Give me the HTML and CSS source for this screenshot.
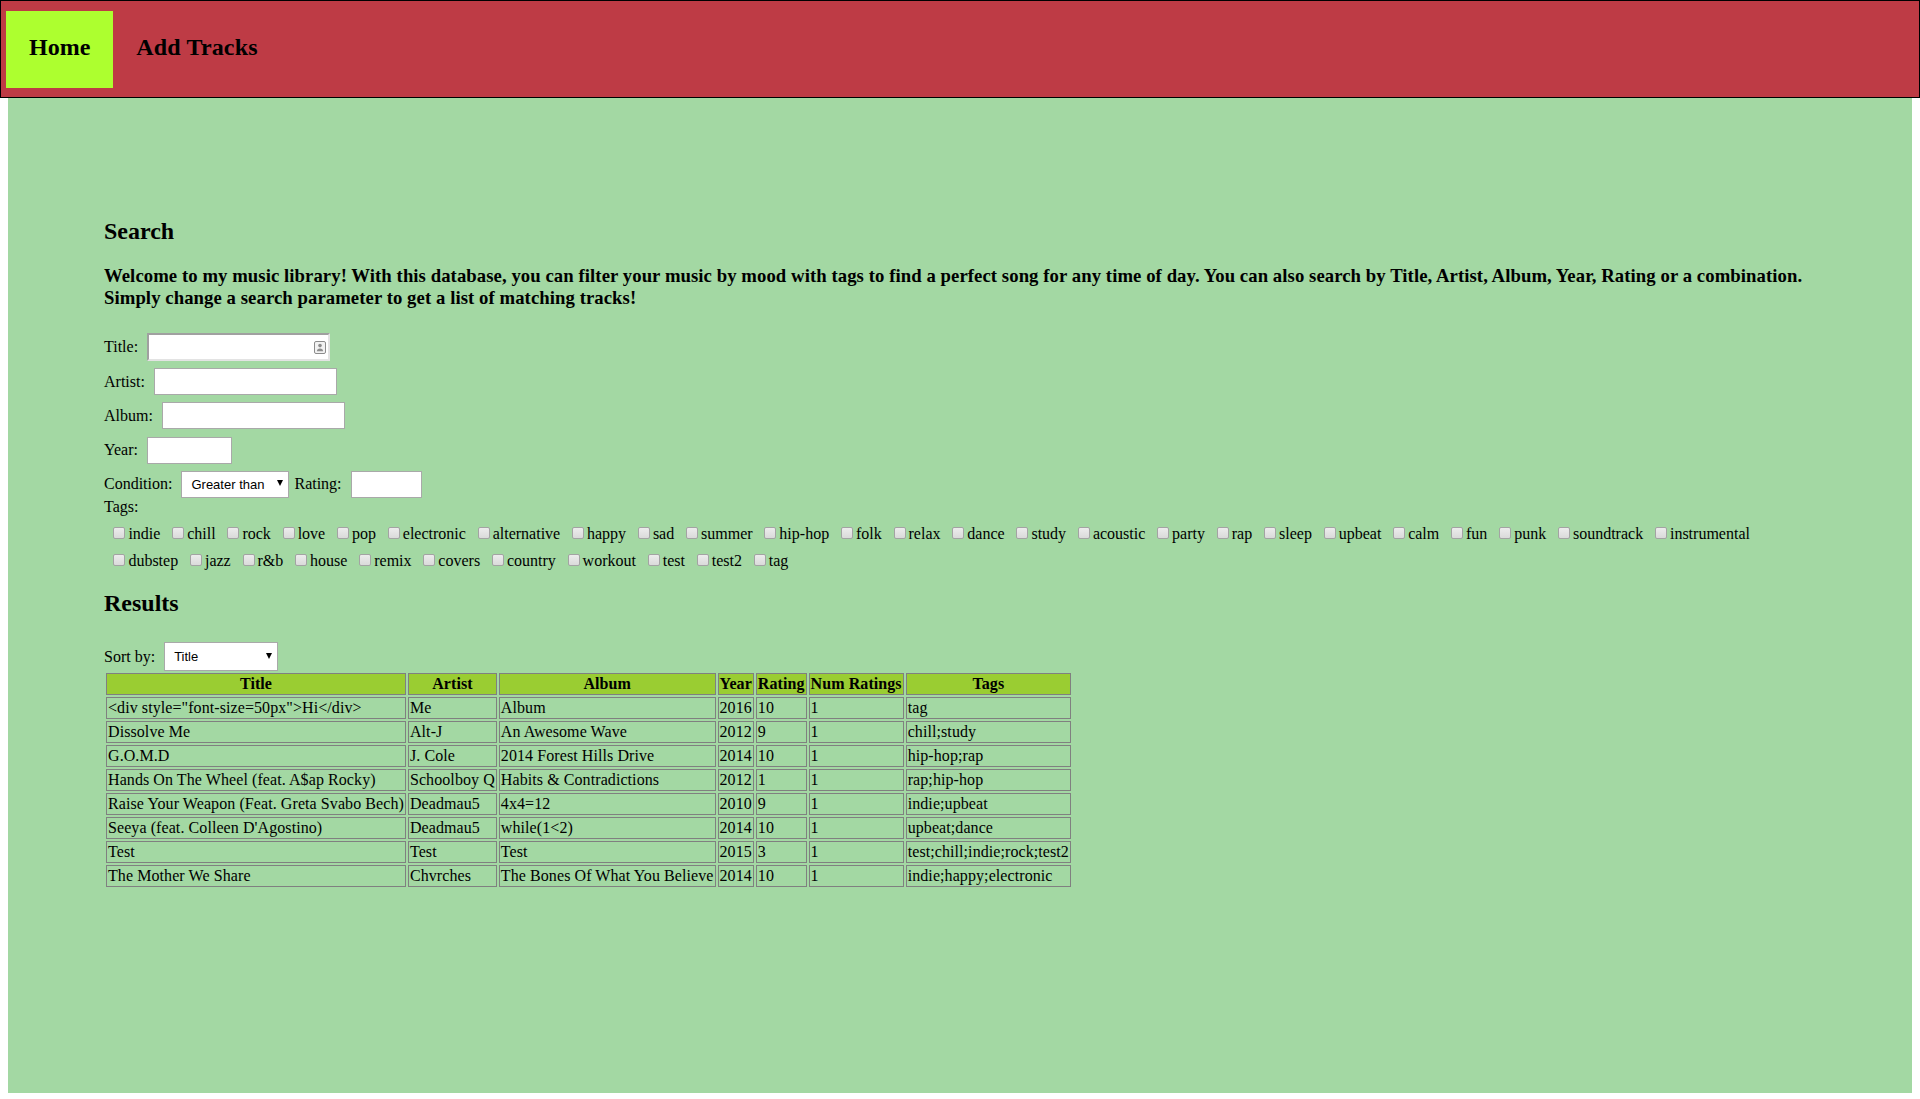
FILE: index.html
```html
<!DOCTYPE html>
<html lang="en">
<head>
<meta charset="utf-8">
<title>Music Library</title>
<link rel="stylesheet" href="styles.css">
</head>
<body>
<header class="topbar">
  <nav class="nav">
    <a class="nav-link nav-link-active" href="#">Home</a>
    <a class="nav-link" href="#">Add Tracks</a>
  </nav>
</header>
<main class="page">
  <h2 class="section-title">Search</h2>
  <h3 class="intro">Welcome to my music library! With this database, you can filter your music by mood with tags to find a perfect song for any time of day. You can also search by Title, Artist, Album, Year, Rating or a combination. Simply change a search parameter to get a list of matching tracks!</h3>
  <form class="search-form">
    <div class="field-row">
      <label class="field-label" for="f-title">Title:</label>
      <span class="input-wrap">
        <input class="text-input text-input-wide text-input-inset" id="f-title" type="text">
        <svg class="autofill-icon" width="12" height="13" viewBox="0 0 12 13" aria-hidden="true"><rect x="0.5" y="0.5" width="11" height="12" rx="1.5" fill="#f2f2f2" stroke="#8c8c8c"/><circle cx="6" cy="4.6" r="1.8" fill="#8c8c8c"/><path d="M2.9 10.2 Q3.1 7.4 6 7.4 Q8.9 7.4 9.1 10.2 Z" fill="#8c8c8c"/></svg>
      </span>
    </div>
    <div class="field-row">
      <label class="field-label" for="f-artist">Artist:</label>
      <input class="text-input text-input-wide" id="f-artist" type="text">
    </div>
    <div class="field-row">
      <label class="field-label" for="f-album">Album:</label>
      <input class="text-input text-input-wide" id="f-album" type="text">
    </div>
    <div class="field-row">
      <label class="field-label" for="f-year">Year:</label>
      <input class="text-input text-input-year" id="f-year" type="text">
    </div>
    <div class="field-row">
      <label class="field-label" for="f-cond">Condition:</label>
      <span class="select-wrap">
        <select class="select select-cond" id="f-cond"><option>Greater than</option><option>Less than</option><option>Equal to</option></select>
      </span>
      <label class="field-label field-label-rating" for="f-rating">Rating:</label>
      <input class="text-input text-input-rating" id="f-rating" type="text">
    </div>
    <div class="tags-label">Tags:</div>
    <div class="tag-list">
      <label class="tag"><input class="tag-box" type="checkbox">indie</label>
      <label class="tag"><input class="tag-box" type="checkbox">chill</label>
      <label class="tag"><input class="tag-box" type="checkbox">rock</label>
      <label class="tag"><input class="tag-box" type="checkbox">love</label>
      <label class="tag"><input class="tag-box" type="checkbox">pop</label>
      <label class="tag"><input class="tag-box" type="checkbox">electronic</label>
      <label class="tag"><input class="tag-box" type="checkbox">alternative</label>
      <label class="tag"><input class="tag-box" type="checkbox">happy</label>
      <label class="tag"><input class="tag-box" type="checkbox">sad</label>
      <label class="tag"><input class="tag-box" type="checkbox">summer</label>
      <label class="tag"><input class="tag-box" type="checkbox">hip-hop</label>
      <label class="tag"><input class="tag-box" type="checkbox">folk</label>
      <label class="tag"><input class="tag-box" type="checkbox">relax</label>
      <label class="tag"><input class="tag-box" type="checkbox">dance</label>
      <label class="tag"><input class="tag-box" type="checkbox">study</label>
      <label class="tag"><input class="tag-box" type="checkbox">acoustic</label>
      <label class="tag"><input class="tag-box" type="checkbox">party</label>
      <label class="tag"><input class="tag-box" type="checkbox">rap</label>
      <label class="tag"><input class="tag-box" type="checkbox">sleep</label>
      <label class="tag"><input class="tag-box" type="checkbox">upbeat</label>
      <label class="tag"><input class="tag-box" type="checkbox">calm</label>
      <label class="tag"><input class="tag-box" type="checkbox">fun</label>
      <label class="tag"><input class="tag-box" type="checkbox">punk</label>
      <label class="tag"><input class="tag-box" type="checkbox">soundtrack</label>
      <label class="tag"><input class="tag-box" type="checkbox">instrumental</label>
      <label class="tag"><input class="tag-box" type="checkbox">dubstep</label>
      <label class="tag"><input class="tag-box" type="checkbox">jazz</label>
      <label class="tag"><input class="tag-box" type="checkbox">r&amp;b</label>
      <label class="tag"><input class="tag-box" type="checkbox">house</label>
      <label class="tag"><input class="tag-box" type="checkbox">remix</label>
      <label class="tag"><input class="tag-box" type="checkbox">covers</label>
      <label class="tag"><input class="tag-box" type="checkbox">country</label>
      <label class="tag"><input class="tag-box" type="checkbox">workout</label>
      <label class="tag"><input class="tag-box" type="checkbox">test</label>
      <label class="tag"><input class="tag-box" type="checkbox">test2</label>
      <label class="tag"><input class="tag-box" type="checkbox">tag</label>
    </div>
  </form>
  <h2 class="section-title section-title-results">Results</h2>
  <div class="sort-row">
    <label class="field-label" for="f-sort">Sort by:</label>
    <span class="select-wrap">
      <select class="select select-sort" id="f-sort"><option>Title</option><option>Artist</option><option>Album</option><option>Year</option><option>Rating</option></select>
    </span>
  </div>
  <table class="results">
    <thead>
      <tr><th>Title</th><th>Artist</th><th>Album</th><th>Year</th><th>Rating</th><th>Num Ratings</th><th>Tags</th></tr>
    </thead>
    <tbody>
      <tr><td>&lt;div style="font-size=50px"&gt;Hi&lt;/div&gt;</td><td>Me</td><td>Album</td><td>2016</td><td>10</td><td>1</td><td>tag</td></tr>
      <tr><td>Dissolve Me</td><td>Alt-J</td><td>An Awesome Wave</td><td>2012</td><td>9</td><td>1</td><td>chill;study</td></tr>
      <tr><td>G.O.M.D</td><td>J. Cole</td><td>2014 Forest Hills Drive</td><td>2014</td><td>10</td><td>1</td><td>hip-hop;rap</td></tr>
      <tr><td>Hands On The Wheel (feat. A$ap Rocky)</td><td>Schoolboy Q</td><td>Habits &amp; Contradictions</td><td>2012</td><td>1</td><td>1</td><td>rap;hip-hop</td></tr>
      <tr><td>Raise Your Weapon (Feat. Greta Svabo Bech)</td><td>Deadmau5</td><td>4x4=12</td><td>2010</td><td>9</td><td>1</td><td>indie;upbeat</td></tr>
      <tr><td>Seeya (feat. Colleen D'Agostino)</td><td>Deadmau5</td><td>while(1&lt;2)</td><td>2014</td><td>10</td><td>1</td><td>upbeat;dance</td></tr>
      <tr><td>Test</td><td>Test</td><td>Test</td><td>2015</td><td>3</td><td>1</td><td>test;chill;indie;rock;test2</td></tr>
      <tr><td>The Mother We Share</td><td>Chvrches</td><td>The Bones Of What You Believe</td><td>2014</td><td>10</td><td>1</td><td>indie;happy;electronic</td></tr>
    </tbody>
  </table>
</main>
</body>
</html>
```

FILE: styles.css
```css
html, body {
  margin: 0;
  padding: 0;
}

body {
  font-family: "Liberation Serif", "Times New Roman", serif;
  font-size: 16px;
  color: #000;
  background: #fff;
}

.topbar {
  box-sizing: border-box;
  width: 100%;
  height: 98px;
  border: 1px solid #000;
  background: #be3b45;
  padding: 10px 5px 0;
}

.nav {
  display: flex;
}

.nav-link {
  display: block;
  height: 77px;
  box-sizing: border-box;
  padding: 23px 23px 0;
  font-size: 24px;
  font-weight: bold;
  color: #000;
  text-decoration: none;
  letter-spacing: 0.15px;
}

.nav-link-active {
  background: #adff2f;
  letter-spacing: 0;
}

.page {
  box-sizing: border-box;
  height: 995px;
  margin: 0 8px;
  padding: 120px 5% 0;
  background: #a3d8a3;
}

.section-title {
  font-size: 24px;
  font-weight: bold;
  margin: 0 0 19.92px;
}

.section-title-results {
  margin: 19.5px 0 25.5px;
}

.intro {
  font-size: 18.72px;
  font-weight: bold;
  margin: 0 0 25px;
  letter-spacing: 0.07px;
}

.search-form {
  margin: 0;
}

.field-row {
  display: flex;
  align-items: center;
  height: 27px;
  margin-bottom: 7.25px;
}

.field-row:nth-child(5) {
  margin-bottom: 0;
}

.field-label {
  margin-right: 9px;
}

.field-label-rating {
  margin-left: 5px;
}

.input-wrap {
  position: relative;
  display: block;
}

.text-input {
  display: block;
  box-sizing: border-box;
  height: 27px;
  margin: 0;
  padding: 1px 4px;
  border: 1px solid #a9a9a9;
  background: #fff;
  font-family: "Liberation Sans", Arial, sans-serif;
  font-size: 13px;
}

.text-input-wide {
  width: 183px;
}

.text-input-inset {
  height: 28px;
  border-width: 2px;
  border-style: solid;
  border-color: #a0a0a0 #e3e3e3 #e3e3e3 #a0a0a0;
}

.text-input-year {
  width: 85px;
}

.text-input-rating {
  width: 71px;
}

.autofill-icon {
  position: absolute;
  right: 4px;
  top: 8px;
}

.select-wrap {
  position: relative;
  display: block;
}

.select-wrap::after {
  content: "";
  position: absolute;
  right: 6px;
  top: 50%;
  margin-top: -4px;
  border-left: 3px solid transparent;
  border-right: 3px solid transparent;
  border-top: 6px solid #000;
  pointer-events: none;
}

.select {
  display: block;
  box-sizing: border-box;
  -webkit-appearance: none;
  appearance: none;
  margin: 0;
  padding: 0 18px 0 9px;
  border: 1px solid #a9a9a9;
  border-radius: 0;
  background: #fff;
  color: #000;
  font-family: "Liberation Sans", Arial, sans-serif;
  font-size: 13px;
}

.select-cond {
  width: 108px;
  height: 27px;
}

.select-sort {
  width: 114px;
  height: 29px;
}

.tags-label {
  line-height: normal;
}

.tag-list {
  display: flex;
  flex-wrap: wrap;
  column-gap: 7.8px;
  row-gap: 9px;
  padding: 9.5px 0 0 5.4px;
}

.tag {
  display: block;
  white-space: nowrap;
}

.tag-box {
  -webkit-appearance: none;
  appearance: none;
  box-sizing: border-box;
  width: 12px;
  height: 12px;
  margin: 0 3px 0 4px;
  border: 1px solid #a3a3a3;
  border-radius: 2px;
  background: linear-gradient(#ececec, #dadada);
  vertical-align: baseline;
}

.sort-row {
  display: flex;
  align-items: center;
  height: 29px;
}

.results {
  border-collapse: separate;
  border-spacing: 2px;
  margin-left: 0;
  letter-spacing: 0.08px;
}

.results th,
.results td {
  border: 1px solid #808080;
  padding: 1px;
  white-space: nowrap;
}

.results th {
  background: #9acd32;
  font-weight: bold;
  text-align: center;
}

.results td {
  text-align: left;
}
```
